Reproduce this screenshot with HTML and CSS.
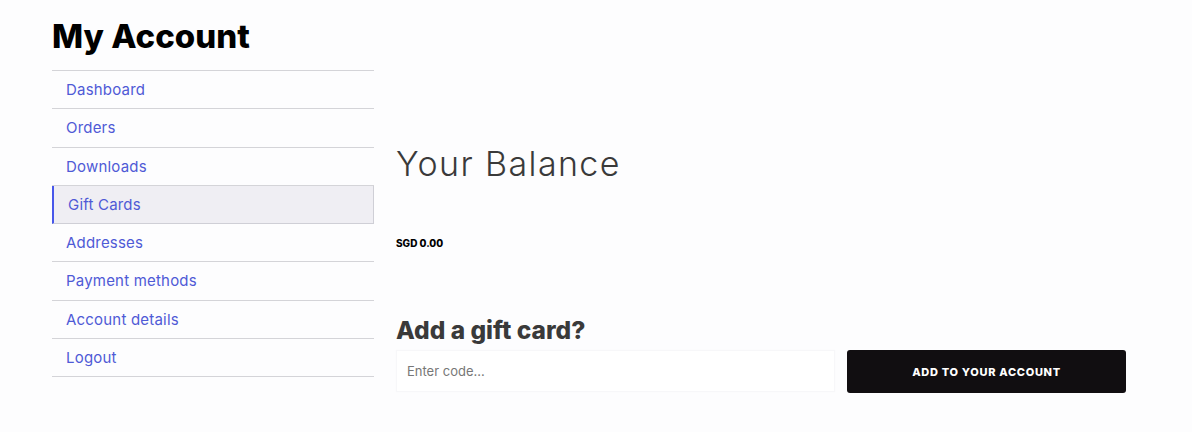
FILE: index.html
```html
<!DOCTYPE html>
<html lang="en">
<head>
<meta charset="utf-8">
<title>My Account</title>
<link rel="stylesheet" href="styles.css">
</head>
<body>
<div class="page">
  <aside class="sidebar">
    <h1 class="page-title">My Account</h1>
    <nav class="account-nav">
      <a class="nav-item" href="#">Dashboard</a>
      <a class="nav-item" href="#">Orders</a>
      <a class="nav-item" href="#">Downloads</a>
      <a class="nav-item active" href="#">Gift Cards</a>
      <a class="nav-item" href="#">Addresses</a>
      <a class="nav-item" href="#">Payment methods</a>
      <a class="nav-item" href="#">Account details</a>
      <a class="nav-item" href="#">Logout</a>
    </nav>
  </aside>
  <main class="content">
    <h2 class="balance-title">Your Balance</h2>
    <p class="balance-amount">SGD 0.00</p>
    <h3 class="add-title">Add a gift card?</h3>
    <form class="add-form">
      <input class="code-input" type="text" placeholder="Enter code...">
      <button class="add-button" type="button">Add to your account</button>
    </form>
  </main>
</div>
</body>
</html>
```

FILE: styles.css
```css
html, body {
  margin: 0;
  padding: 0;
  background: #fdfdfe;
}
body {
  font-family: "Inter", "Open Sans", sans-serif;
  color: #3a3a3a;
}
.page {
  display: flex;
  gap: 22px;
  padding: 0 66px 0 52px;
}
.sidebar {
  width: 322px;
  flex: none;
}
.page-title {
  margin: 0;
  padding-top: 17px;
  height: 70px;
  box-sizing: border-box;
  font-size: 33px;
  line-height: 38px;
  font-weight: 800;
  color: #000;
}
.account-nav {
  display: flex;
  flex-direction: column;
  border-top: 1px solid #d4d4d8;
}
.nav-item {
  display: block;
  height: 37.3px;
  line-height: 38px;
  padding-left: 14px;
  border-bottom: 1px solid #d4d4d8;
  font-size: 15px;
  letter-spacing: 0.2px;
  color: #4f5ad6;
  text-decoration: none;
}
.nav-item.active {
  background: #efeef3;
  border: 1px solid #cfcfd6;
  border-left: 2px solid #4857ea;
  border-top: none;
  padding-left: 14px;
}
.content {
  flex: 1;
  padding-top: 142px;
}
.balance-title {
  margin: 0;
  font-size: 34px;
  line-height: 44px;
  font-weight: 300;
  letter-spacing: 1.4px;
  color: #3a3a3a;
}
.balance-amount {
  margin: 50px 0 0;
  font-size: 10px;
  line-height: 14px;
  font-weight: 800;
  color: #000;
}
.add-title {
  margin: 64px 0 0;
  font-size: 24.5px;
  line-height: 32px;
  font-weight: 800;
  color: #3a3a3a;
}
.add-form {
  display: flex;
  gap: 12px;
  margin-top: 4px;
}
.code-input {
  flex: none;
  width: 439px;
  height: 42px;
  box-sizing: border-box;
  border: 1px solid #f7f7f9;
  background: #fff;
  box-shadow: 0 0 3px rgba(0,0,0,0.02);
  padding: 0 10px;
  font-family: inherit;
  font-size: 13px;
  color: #3a3a3a;
  outline: none;
}
.code-input::placeholder {
  color: #777;
}
.add-button {
  flex: 1;
  height: 43px;
  border: none;
  border-radius: 3px;
  background: #110e11;
  color: #fff;
  font-family: inherit;
  font-size: 11px;
  font-weight: 800;
  text-transform: uppercase;
  letter-spacing: 0.7px;
  cursor: pointer;
}
```
